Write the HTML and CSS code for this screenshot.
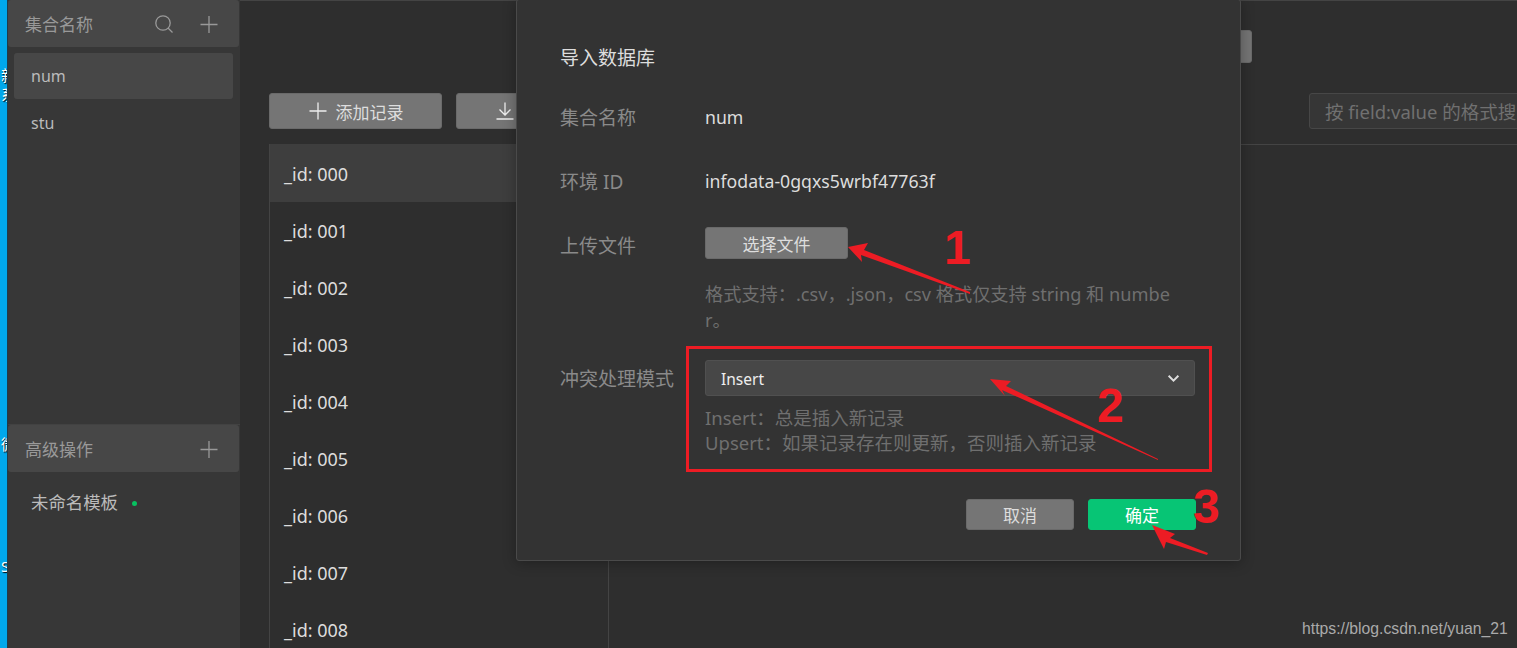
FILE: index.html
```html
<!DOCTYPE html>
<html lang="zh-CN">
<head>
    <meta charset="UTF-8">
    <title>导入数据库</title>
    <link rel="stylesheet" href="styles.css">
</head>
<body>
    <div class="desktop-strip">
        <span class="desk-glyph g1">新</span>
        <span class="desk-glyph g2">系</span>
        <span class="desk-glyph g3">微</span>
        <span class="desk-glyph g4">S</span>
    </div>

    <aside class="sidebar">
        <section class="side-top">
            <div class="side-head">
                <span class="side-title">集合名称</span>
                <svg class="side-icon search-icon" viewBox="0 0 20 20"><circle cx="9" cy="9" r="7.2"/><path d="M14 14l4.5 4.5"/></svg>
                <svg class="side-icon" viewBox="0 0 20 20"><path d="M10 2v17M1.500 10.500h17"/></svg>
            </div>
            <div class="side-item latin active">num</div>
            <div class="side-item latin">stu</div>
        </section>
        <section class="side-bottom">
            <div class="side-head">
                <span class="side-title">高级操作</span>
                <svg class="side-icon" viewBox="0 0 20 20"><path d="M10 2v17M1.500 10.500h17"/></svg>
            </div>
            <div class="side-item template">未命名模板<i class="dot"></i></div>
        </section>
    </aside>

    <main class="main">
        <div class="top-row"><button class="btn top-btn"></button></div>
        <div class="toolbar">
            <button class="btn add-btn">
                <svg class="btn-icon" viewBox="0 0 20 20"><path d="M10 1.500v17M1.500 10h17"/></svg>添加记录
            </button>
            <button class="btn export-btn">
                <svg class="btn-icon" viewBox="0 0 20 20"><path d="M10 1.500v12M4.500 8.500l5.500 5.500 5.500-5.500M1.500 18h17"/></svg>
            </button>
            <div class="search">按 field:value 的格式搜索</div>
        </div>
        <div class="content">
            <div class="record-list">
                <div class="record active">_id: 000</div>
                <div class="record">_id: 001</div>
                <div class="record">_id: 002</div>
                <div class="record">_id: 003</div>
                <div class="record">_id: 004</div>
                <div class="record">_id: 005</div>
                <div class="record">_id: 006</div>
                <div class="record">_id: 007</div>
                <div class="record">_id: 008</div>
            </div>
            <div class="detail"></div>
        </div>
    </main>

    <div class="dialog">
        <h2 class="dialog-title">导入数据库</h2>
        <div class="form-row row-name">
            <label>集合名称</label>
            <div class="value">num</div>
        </div>
        <div class="form-row row-env">
            <label>环境 ID</label>
            <div class="value">infodata-0gqxs5wrbf47763f</div>
        </div>
        <div class="form-row row-file">
            <label>上传文件</label>
            <div class="field">
                <button class="btn pick-btn">选择文件</button>
                <p class="hint file-hint">格式支持：.csv，.json，csv 格式仅支持 string 和 number。</p>
            </div>
        </div>
        <div class="form-row row-mode">
            <label>冲突处理模式</label>
            <div class="field">
                <div class="select">Insert
                    <svg class="chevron" viewBox="0 0 12 8"><path d="M1.500 1.500L6 6l4.500-4.500"/></svg>
                </div>
                <p class="hint mode-hint">Insert：总是插入新记录<br>Upsert：如果记录存在则更新，否则插入新记录</p>
            </div>
        </div>
        <div class="dialog-foot">
            <button class="btn foot-btn">取消</button>
            <button class="btn foot-btn primary">确定</button>
        </div>
    </div>

    <!-- red marks drawn over the screenshot -->
    <div class="red-box"></div>
    <svg class="marks" viewBox="0 0 1517 648">
        <polygon points="848,247 868,243 864,250 970,292 970,294 861,255 862,262"/>
        <polygon points="990,379 1011,381 1006,386 1158,459 1158,460 1002,390 1005,396"/>
        <polygon points="1152,525 1175,534 1170,538 1208,553 1207,555 1166,542 1164,549"/>
    </svg>
    <span class="mark-num n1">1</span>
    <span class="mark-num n2">2</span>
    <span class="mark-num n3">3</span>
    <span class="watermark">https://blog.csdn.net/yuan_21</span>
</body>
</html>
```

FILE: styles.css
```css
* {
    box-sizing: border-box;
}
html, body {
    height: 100%;
}
body {
    margin: 0;
    display: flex;
    height: 648px;
    overflow: hidden;
    position: relative;
    background: #2e2e2e;
    color: #ccc;
    font-family: "Noto Sans", "Noto Sans CJK SC", sans-serif;
    font-size: 17px;
}
.desktop-strip {
    width: 8px;
    flex-shrink: 0;
    position: relative;
    overflow: hidden;
    background: #00a8ec;
    border-right: 1px solid #1f3c4a;
}
.desk-glyph {
    position: absolute;
    left: 1px;
    font-size: 15px;
    line-height: 16px;
    color: #fff;
    text-shadow: 1px 1px 1px #000;
}
.g1 { top: 67px; }
.g2 { top: 86px; }
.g3 { top: 436px; }
.g4 { top: 558px; }

.sidebar {
    width: 232px;
    flex-shrink: 0;
    background: #373737;
    display: flex;
    flex-direction: column;
}
.side-top {
    height: 425px;
    border-bottom: 1px solid #424242;
}
.side-bottom {
    flex: 1;
}
.side-head {
    height: 47px;
    display: flex;
    align-items: center;
    padding: 0 20px 0 17px;
    background: #474747;
    border-radius: 3px;
    margin: 0 1px 6px 0;
}
.side-bottom .side-head {
    margin-bottom: 7px;
}
.side-title {
    flex: 1;
    color: #999;
}
.side-icon {
    width: 20px;
    height: 20px;
    margin-left: 25px;
    fill: none;
    stroke: #999;
    stroke-width: 1.300;
}
.side-item {
    height: 46px;
    margin: 0 7px 1px 6px;
    padding-left: 17px;
    display: flex;
    align-items: center;
    border-radius: 3px;
    color: #bbb;
}
.side-item.latin {
    font-size: 16px;
    padding-bottom: 1px;
}
.side-item.template {
    font-size: 17.4px;
    padding-bottom: 2px;
}
.side-item.active {
    padding-bottom: 0;
    background: #474747;
}
.dot {
    width: 5px;
    height: 5px;
    margin-left: 14px;
    margin-top: 4px;
    border-radius: 50%;
    background: #07c160;
}

.main {
    flex: 1;
    min-width: 0;
    display: flex;
    flex-direction: column;
    border-top: 1px solid #444;
}
.top-row {
    height: 92px;
    padding: 29px 0 0 600px;
}
.btn {
    border: 1px solid #6a6a6a;
    border-radius: 3px;
    background: #757575;
    color: #ddd;
    font-family: inherit;
    font-size: 17px;
    display: flex;
    align-items: center;
    justify-content: center;
    padding: 0;
}
.top-btn {
    width: 412px;
    height: 33px;
}
.toolbar {
    height: 51px;
    padding-left: 29px;
    display: flex;
    align-items: flex-start;
    gap: 14px;
}
.add-btn, .export-btn {
    width: 173px;
    height: 36px;
    flex-shrink: 0;
}
.export-btn {
    justify-content: flex-start;
    padding-left: 38px;
}
.btn-icon {
    width: 20px;
    height: 20px;
    margin-right: 8px;
    fill: none;
    stroke: #eee;
    stroke-width: 1.300;
}
.search {
    flex-shrink: 0;
    width: 260px;
    height: 36px;
    margin-left: 666px;
    padding-left: 15px;
    display: flex;
    align-items: center;
    border: 1px solid #474747;
    border-radius: 3px;
    background: #363636;
    color: #707070;
    font-size: 18.5px;
    white-space: nowrap;
}
.content {
    flex: 1;
    display: flex;
    min-height: 0;
    padding-left: 29px;
}
.record-list {
    width: 340px;
    flex-shrink: 0;
    border-left: 1px solid #444;
    border-right: 1px solid #444;
}
.record {
    height: 57px;
    padding-left: 14px;
    display: flex;
    align-items: center;
    font-size: 18px;
    color: #ddd;
}
.record.active {
    height: 58px;
    padding-top: 1px;
    background: #3e3e3e;
}
.detail {
    flex: 1;
    border-top: 1px solid #444;
}

.dialog {
    position: absolute;
    left: 516px;
    top: -1px;
    width: 725px;
    height: 562px;
    padding: 0 45px 0 43px;
    background: #333;
    border: 1px solid #4a4a4a;
    border-radius: 3px;
    box-shadow: 0 2px 14px rgba(0, 0, 0, 0.3);
    display: flex;
    flex-direction: column;
}
.dialog-title {
    margin: 0;
    height: 101px;
    padding-top: 44px;
    font-size: 19px;
    line-height: 28px;
    font-weight: 400;
    color: #ddd;
}
.form-row {
    display: flex;
}
.form-row label {
    width: 145px;
    flex-shrink: 0;
    padding-top: 1px;
    font-size: 19px;
    line-height: 32px;
    color: #8a8a8a;
}
.value {
    font-size: 17.7px;
    line-height: 32px;
    color: #ddd;
}
.row-name, .row-env {
    height: 64px;
}
.row-file {
    height: 131px;
}
.row-mode {
    height: 139px;
}
.field {
    flex: 1;
    min-width: 0;
}
.pick-btn {
    width: 143px;
    height: 32px;
    margin-top: -2px;
}
.hint {
    margin: 0;
    font-size: 18.5px;
    line-height: 26px;
    color: #6f6f6f;
}
.file-hint {
    width: 476px;
    margin-top: 22px;
    font-size: 18.2px;
    word-break: break-all;
}
.row-mode label {
    line-height: 36px;
}
.select {
    height: 36px;
    padding: 1px 14px 0 15px;
    display: flex;
    align-items: center;
    justify-content: space-between;
    background: #474747;
    border: 1px solid #505050;
    border-radius: 3px;
    font-size: 15.5px;
    color: #eee;
}
.chevron {
    width: 13px;
    height: 9px;
    fill: none;
    stroke: #ddd;
    stroke-width: 1.800;
}
.mode-hint {
    margin-top: 9px;
    line-height: 25px;
}
.dialog-foot {
    display: flex;
    justify-content: flex-end;
    gap: 14px;
    margin-right: -1px;
}
.foot-btn {
    width: 108px;
    height: 31px;
}
.foot-btn.primary {
    background: #07c575;
    border-color: #07c575;
    color: #fff;
}

.red-box {
    position: absolute;
    left: 686px;
    top: 346px;
    width: 526px;
    height: 126px;
    border: 3px solid #ed1c24;
}
.marks {
    position: absolute;
    left: 0;
    top: 0;
    width: 1517px;
    height: 648px;
    fill: #ed1c24;
}
.mark-num {
    position: absolute;
    font-family: "Liberation Sans", sans-serif;
    font-weight: 700;
    font-size: 48px;
    line-height: 50px;
    color: #ed1c24;
}
.n1 { left: 944px; top: 223px; }
.n2 { left: 1097px; top: 381px; }
.n3 { left: 1193px; top: 482px; }
.watermark {
    position: absolute;
    left: 1302px;
    top: 619px;
    font-family: "Liberation Sans", sans-serif;
    font-size: 15.75px;
    line-height: 20px;
    color: #aaa;
}
```
